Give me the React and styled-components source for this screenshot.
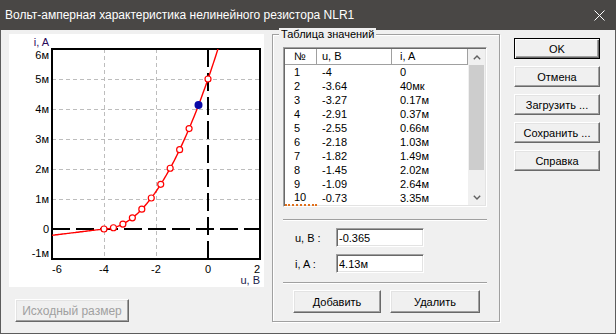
import React from "react";
import styled, { createGlobalStyle } from "styled-components";

const GlobalStyle = createGlobalStyle`
  html, body {
    margin: 0;
    padding: 0;
    background: #f0f0f0;
  }
  body {
    width: 616px;
    height: 334px;
    overflow: hidden;
  }
`;

const Window = styled.div`
  box-sizing: border-box;
  width: 616px;
  height: 334px;
  border: 1px solid #5c5c5c;
  border-top: none;
  background: #f0f0f0;
  display: flex;
  flex-direction: column;
  font-family: "Liberation Sans", Arial, sans-serif;
  color: #000;
`;

const TitleBar = styled.div`
  height: 30px;
  flex: none;
  margin: 0 -1px;
  background: #494745;
  color: #fff;
  display: flex;
  align-items: center;
  justify-content: space-between;
  padding: 0 11px 0 5px;
  font-size: 12px;
`;

const Client = styled.div`
  display: flex;
  padding: 4px 0 0 8px;
`;

const LeftCol = styled.div`
  display: flex;
  flex-direction: column;
  width: 255px;
`;

const PlotPanel = styled.div`
  width: 255px;
  height: 253px;
  background: #fff;
`;

const Btn = styled.button`
  box-sizing: border-box;
  width: ${(p) => p.$w}px;
  height: ${(p) => p.$h || 21}px;
  padding: 0;
  background: #f0f0f0;
  border: 1px solid;
  border-color: ${(p) => (p.$default ? "#000" : "#fff #696969 #696969 #fff")};
  box-shadow: ${(p) =>
    p.$default
      ? "inset 1px 1px #fff, inset -1px -1px #696969, inset -2px -2px #a0a0a0"
      : "inset -1px -1px #a0a0a0, inset 1px 1px #e3e3e3"};
  font-family: "Liberation Sans", Arial, sans-serif;
  font-size: ${(p) => p.$fs || 11}px;
  color: ${(p) => (p.disabled ? "#a0a0a0" : "#000")};
`;

const ResetBtn = styled(Btn)`
  margin: 12px 0 0 6px;
`;

const Group = styled.div`
  position: relative;
  box-sizing: border-box;
  width: 228px;
  height: 288px;
  margin-left: 8px;
  padding: 12px 0 0 10px;
  border: 1px solid #a0a0a0;
  box-shadow: inset 1px 1px #fff, 1px 1px #fff;
`;

const GroupLabel = styled.span`
  position: absolute;
  top: -7px;
  left: 6px;
  padding: 0 2px;
  background: #f0f0f0;
  font-size: 11px;
  line-height: 13px;
`;

const List = styled.div`
  box-sizing: border-box;
  width: 204px;
  height: 160px;
  padding: 1px;
  display: flex;
  background: #fff;
  border: 1px solid;
  border-color: #a0a0a0 #fff #fff #a0a0a0;
  box-shadow: inset 1px 1px #696969, inset -1px -1px #e3e3e3;
`;

const TableArea = styled.div`
  width: 183px;
  display: flex;
  flex-direction: column;
`;

const GridRow = styled.div`
  display: grid;
  grid-template-columns: 32px 75px 76px;
  height: ${(p) => (p.$head ? 16 : 14)}px;
  font-size: 11px;
  line-height: ${(p) => (p.$head ? 15 : 14)}px;
`;

const Cell = styled.div`
  box-sizing: border-box;
  padding-left: ${(p) => p.$pad}px;
  white-space: nowrap;
  ${(p) =>
    p.$head &&
    "border-right: 1px solid #a0a0a0; border-bottom: 1px solid #a0a0a0; box-shadow: inset 1px 1px #fff;"}
  ${(p) => p.$focus && "border-bottom: 2px dotted #e0701c; line-height: 13px;"}
`;

const ScrollBar = styled.div`
  width: 17px;
  display: flex;
  flex-direction: column;
  background: #f0f0f0;
`;

const ScrollArrow = styled.div`
  height: 16px;
  display: flex;
  align-items: center;
  justify-content: center;
`;

const Thumb = styled.div`
  height: 105px;
  margin: 0 1px;
  background: #cdcdcd;
`;

const Track = styled.div`
  flex: 1;
`;

const Separator = styled.div`
  width: 204px;
  border-top: 1px solid #a0a0a0;
  border-bottom: 1px solid #fff;
  margin-top: ${(p) => p.$mt}px;
`;

const FormRow = styled.div`
  display: flex;
  align-items: center;
  margin-top: 7px;
  padding-left: 12px;
  font-size: 11px;
`;

const FieldLabel = styled.span`
  width: 41px;
`;

const Field = styled.input`
  box-sizing: border-box;
  width: 88px;
  height: 19px;
  margin: 0;
  padding: 0 2px;
  background: #fff;
  border: 1px solid;
  border-color: #a0a0a0 #fff #fff #a0a0a0;
  box-shadow: inset 1px 1px #696969, inset -1px -1px #e3e3e3;
  font-family: "Liberation Sans", Arial, sans-serif;
  font-size: 11px;
  color: #000;
  outline: none;
`;

const ActionRow = styled.div`
  display: flex;
  gap: 9px;
  margin-top: 6px;
  padding-left: 10px;
`;

const RightCol = styled.div`
  display: flex;
  flex-direction: column;
  gap: 7px;
  margin-left: 14px;
  padding-top: 4px;
`;

const Chevron = ({ down }) => (
  <svg width="8" height="5" viewBox="0 0 8 5">
    <polyline
      points={down ? "0.8,0.8 4,4 7.2,0.8" : "0.8,4.2 4,1 7.2,4.2"}
      fill="none"
      stroke="#606060"
      strokeWidth="1.4"
    />
  </svg>
);

const CloseIcon = () => (
  <svg width="11" height="11" viewBox="0 0 11 11">
    <path d="M0.5 0.5 L10.5 10.5 M10.5 0.5 L0.5 10.5" stroke="#fff" strokeWidth="1" />
  </svg>
);

const X0 = 43;
const Y0 = 15;
const ux = (u) => X0 + (u + 6) * 26;
const iy = (i) => Y0 + (6 - i) * 30;
const curveI = (u) => (u < -4 ? 0.105 * (u + 4) : 0.3125 * (u + 4) ** 2);

const curvePts = [];
for (let u = -6; u <= 0.6; u += 0.05) {
  curvePts.push(`${ux(u).toFixed(1)},${iy(curveI(u)).toFixed(1)}`);
}

const marks = Array.from({ length: 12 }, (_, k) => -4 + (k * 4) / 11);

// the end labels are kept inside the frame, the others sit on their line
const yLabels = [
  [6, "6м", 10],
  [5, "5м", 4],
  [4, "4м", 4],
  [3, "3м", 4],
  [2, "2м", 4],
  [1, "1м", 4],
  [0, "0", 4],
  [-1, "-1м", -2],
];

const xLabels = [
  [-6, "-6", "start"],
  [-4, "-4", "middle"],
  [-2, "-2", "middle"],
  [0, "0", "middle"],
  [2, "2", "end"],
];

const Plot = () => (
  <svg width="255" height="253" fontFamily="'Liberation Sans', Arial, sans-serif" fontSize="11">
    <defs>
      <clipPath id="frame">
        <rect x={X0} y={Y0} width="208" height="210" />
      </clipPath>
    </defs>
    {[-4, -2].map((u) => (
      <line key={u} x1={ux(u) + 0.5} x2={ux(u) + 0.5} y1={Y0} y2={Y0 + 210} stroke="#bdbdbd" strokeDasharray="4 3" />
    ))}
    {[1, 2, 3, 4, 5].map((i) => (
      <line key={i} x1={X0} x2={X0 + 208} y1={iy(i) + 0.5} y2={iy(i) + 0.5} stroke="#bdbdbd" strokeDasharray="4 3" />
    ))}
    <line x1={X0} x2={X0 + 208} y1={iy(0)} y2={iy(0)} stroke="#000" strokeWidth="2" strokeDasharray="18 6" />
    <line x1={ux(0)} x2={ux(0)} y1={Y0} y2={Y0 + 210} stroke="#000" strokeWidth="2" strokeDasharray="18 6" />
    <rect x={X0} y={Y0} width="208" height="210" fill="none" stroke="#000" strokeWidth="2" />
    <g clipPath="url(#frame)">
      <polyline points={curvePts.join(" ")} fill="none" stroke="#ff0000" strokeWidth="1.4" />
    </g>
    {marks.map((u, k) =>
      k === 10 ? null : (
        <circle key={k} cx={ux(u)} cy={iy(curveI(u))} r="3" fill="#fff" stroke="#ff0000" strokeWidth="1.2" />
      )
    )}
    <circle cx={ux(-0.365)} cy={iy(4.13)} r="4" fill="#0a0aa8" />
    {yLabels.map(([i, t, dy]) => (
      <text key={t} x="40" y={iy(i) + dy} textAnchor="end" fill="#000">
        {t}
      </text>
    ))}
    <text x="40" y="12" textAnchor="end" fill="#2a0a5a">
      i, A
    </text>
    {xLabels.map(([u, t, a]) => (
      <text key={t} x={ux(u)} y="239" textAnchor={a} fill="#000">
        {t}
      </text>
    ))}
    <text x="251" y="250" textAnchor="end" fill="#1a1a4a">
      u, B
    </text>
  </svg>
);

const rows = [
  ["1", "-4", "0"],
  ["2", "-3.64", "40мк"],
  ["3", "-3.27", "0.17м"],
  ["4", "-2.91", "0.37м"],
  ["5", "-2.55", "0.66м"],
  ["6", "-2.18", "1.03м"],
  ["7", "-1.82", "1.49м"],
  ["8", "-1.45", "2.02м"],
  ["9", "-1.09", "2.64м"],
  ["10", "-0.73", "3.35м"],
];

const pads = [9, 5, 8];

export default function App() {
  return (
    <>
      <GlobalStyle />
      <Window>
        <TitleBar>
          <span>Вольт-амперная характеристика нелинейного резистора NLR1</span>
          <CloseIcon />
        </TitleBar>
        <Client>
          <LeftCol>
            <PlotPanel>
              <Plot />
            </PlotPanel>
            <ResetBtn $w={114} $h={23} $fs={12} disabled>
              Исходный размер
            </ResetBtn>
          </LeftCol>

          <Group>
            <GroupLabel>Таблица значений</GroupLabel>
            <List>
              <TableArea>
                <GridRow $head>
                  {["№", "u, B", "i, A"].map((h, c) => (
                    <Cell key={h} $head $pad={pads[c]}>
                      {h}
                    </Cell>
                  ))}
                </GridRow>
                {rows.map((r, n) => (
                  <GridRow key={r[0]}>
                    {r.map((v, c) => (
                      <Cell key={c} $pad={pads[c]} $focus={n === 9 && c === 0}>
                        {v}
                      </Cell>
                    ))}
                  </GridRow>
                ))}
              </TableArea>
              <ScrollBar>
                <ScrollArrow>
                  <Chevron />
                </ScrollArrow>
                <Thumb />
                <Track />
                <ScrollArrow>
                  <Chevron down />
                </ScrollArrow>
              </ScrollBar>
            </List>
            <Separator $mt={12} />
            <FormRow>
              <FieldLabel>u, B :</FieldLabel>
              <Field defaultValue="-0.365" />
            </FormRow>
            <FormRow>
              <FieldLabel>i, A :</FieldLabel>
              <Field defaultValue="4.13м" />
            </FormRow>
            <Separator $mt={9} />
            <ActionRow>
              <Btn $w={88} $h={23}>Добавить</Btn>
              <Btn $w={90} $h={23}>Удалить</Btn>
            </ActionRow>
          </Group>

          <RightCol>
            <Btn $w={86} $default>OK</Btn>
            <Btn $w={86}>Отмена</Btn>
            <Btn $w={86}>Загрузить ...</Btn>
            <Btn $w={86}>Сохранить ...</Btn>
            <Btn $w={86}>Справка</Btn>
          </RightCol>
        </Client>
      </Window>
    </>
  );
}
